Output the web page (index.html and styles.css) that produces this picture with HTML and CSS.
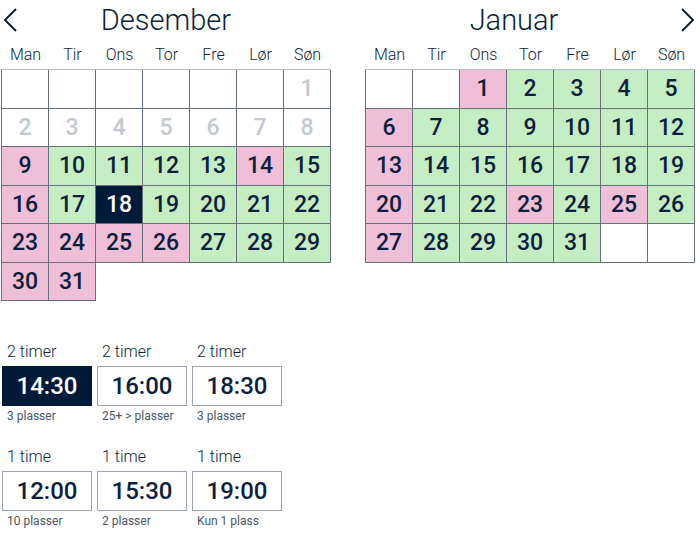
FILE: index.html
```html
<!DOCTYPE html>
<html lang="nb">
<head>
  <meta charset="UTF-8" />
  <meta name="viewport" content="width=device-width, initial-scale=1.0"/>
  <title>Velg tidspunkt</title>
  <link rel="stylesheet" href="styles.css">
</head>
<body>
  <div class="months">
    <div class="month">
      <div class="month-head">
        <svg class="chevron" width="16" height="26" viewBox="0 0 16 26"><polyline points="14,2 3,13 14,24" /></svg>
        <h2>Desember</h2>
      </div>
      <div class="weekdays">
        <span>Man</span><span>Tir</span><span>Ons</span><span>Tor</span><span>Fre</span><span>Lør</span><span>Søn</span>
      </div>
      <div class="days" id="dec"></div>
    </div>

    <div class="month">
      <div class="month-head next">
        <h2>Januar</h2>
        <svg class="chevron" width="16" height="26" viewBox="0 0 16 26"><polyline points="2,2 13,13 2,24" /></svg>
      </div>
      <div class="weekdays">
        <span>Man</span><span>Tir</span><span>Ons</span><span>Tor</span><span>Fre</span><span>Lør</span><span>Søn</span>
      </div>
      <div class="days" id="jan"></div>
    </div>
  </div>

  <div class="slots">
    <div class="slot">
      <div class="slot-len">2 timer</div>
      <div class="slot-time selected">14:30</div>
      <div class="slot-seats">3 plasser</div>
    </div>
    <div class="slot">
      <div class="slot-len">2 timer</div>
      <div class="slot-time">16:00</div>
      <div class="slot-seats">25+ &gt; plasser</div>
    </div>
    <div class="slot">
      <div class="slot-len">2 timer</div>
      <div class="slot-time">18:30</div>
      <div class="slot-seats">3 plasser</div>
    </div>
    <div class="slot">
      <div class="slot-len">1 time</div>
      <div class="slot-time">12:00</div>
      <div class="slot-seats">10 plasser</div>
    </div>
    <div class="slot">
      <div class="slot-len">1 time</div>
      <div class="slot-time">15:30</div>
      <div class="slot-seats">2 plasser</div>
    </div>
    <div class="slot">
      <div class="slot-len">1 time</div>
      <div class="slot-time">19:00</div>
      <div class="slot-seats">Kun 1 plass</div>
    </div>
  </div>

  <script>
    // b = blank, p = passert, r = fullt (rosa), g = ledig (grønn), s = valgt
    const desember = [
      ["b",""],["b",""],["b",""],["b",""],["b",""],["b",""],["p",1],
      ["p",2],["p",3],["p",4],["p",5],["p",6],["p",7],["p",8],
      ["r",9],["g",10],["g",11],["g",12],["g",13],["r",14],["g",15],
      ["r",16],["g",17],["s",18],["g",19],["g",20],["g",21],["g",22],
      ["r",23],["r",24],["r",25],["r",26],["g",27],["g",28],["g",29],
      ["r",30],["r",31]
    ];

    const fulltJan = [1, 6, 13, 20, 23, 25, 27];
    const januar = [["b",""],["b",""]];
    for (let d = 1; d <= 31; d++) {
      januar.push([fulltJan.includes(d) ? "r" : "g", d]);
    }
    januar.push(["b",""],["b",""]);

    function tegn(id, dager) {
      const el = document.getElementById(id);
      el.innerHTML = dager.map(([type, nr]) =>
        `<div class="day ${type}">${nr}</div>`
      ).join("");
    }

    tegn("dec", desember);
    tegn("jan", januar);
  </script>
</body>
</html>
```

FILE: styles.css
```css
body {
  margin: 0;
  background: #fff;
  color: #0d1f3c;
  font-family: Roboto, "Liberation Sans", sans-serif;
}

.months {
  display: flex;
  gap: 34px;
  padding-left: 1px;
}

.month {
  width: 330px;
}

.month-head {
  display: grid;
  height: 40px;
  align-items: center;
}

.month-head > * {
  grid-area: 1 / 1;
}

.month-head h2 {
  margin: 0;
  font-size: 29px;
  font-weight: 300;
  line-height: 40px;
  text-align: center;
}

.month-head .chevron {
  justify-self: start;
  margin-left: 1px;
}

.month-head.next h2 {
  margin-right: 32px;
}

.month-head.next .chevron {
  justify-self: end;
  margin-right: -1px;
}

.chevron polyline {
  fill: none;
  stroke: #0d1f3c;
  stroke-width: 2;
}

.weekdays {
  display: grid;
  grid-template-columns: repeat(7, 47px);
  padding-left: 1px;
  height: 29px;
  line-height: 29px;
  font-size: 16px;
  font-weight: 300;
  text-align: center;
}

.days {
  display: grid;
  grid-template-columns: repeat(7, 47px);
  grid-auto-rows: 38.5px;
  width: fit-content;
  border-top: 1px solid #b6bcc5;
  border-left: 1px solid #66717f;
}

.day {
  display: flex;
  align-items: center;
  justify-content: center;
  border-right: 1px solid #66717f;
  border-bottom: 1px solid #66717f;
  font-size: 23px;
  font-weight: 500;
}

.day.p {
  color: #c4c9d0;
}

.day.r {
  background: #eebfd6;
}

.day.g {
  background: #c4edc4;
}

.day.s {
  background: #001a3a;
  color: #fff;
}

.slots {
  display: grid;
  grid-template-columns: repeat(3, 90px);
  column-gap: 5px;
  row-gap: 24px;
  padding: 41px 0 0 2px;
}

.slot-len {
  font-size: 16px;
  font-weight: 300;
  line-height: 20px;
  padding-left: 5px;
  margin-bottom: 4px;
}

.slot-time {
  box-sizing: border-box;
  height: 40px;
  border: 1px solid #9aa3af;
  font-size: 24px;
  font-weight: 500;
  line-height: 38px;
  text-align: center;
}

.slot-time.selected {
  background: #001a3a;
  border-color: #001a3a;
  color: #fff;
}

.slot-seats {
  margin-top: 3px;
  padding-left: 5px;
  font-size: 12px;
  line-height: 14px;
  color: #4b5668;
}
```
